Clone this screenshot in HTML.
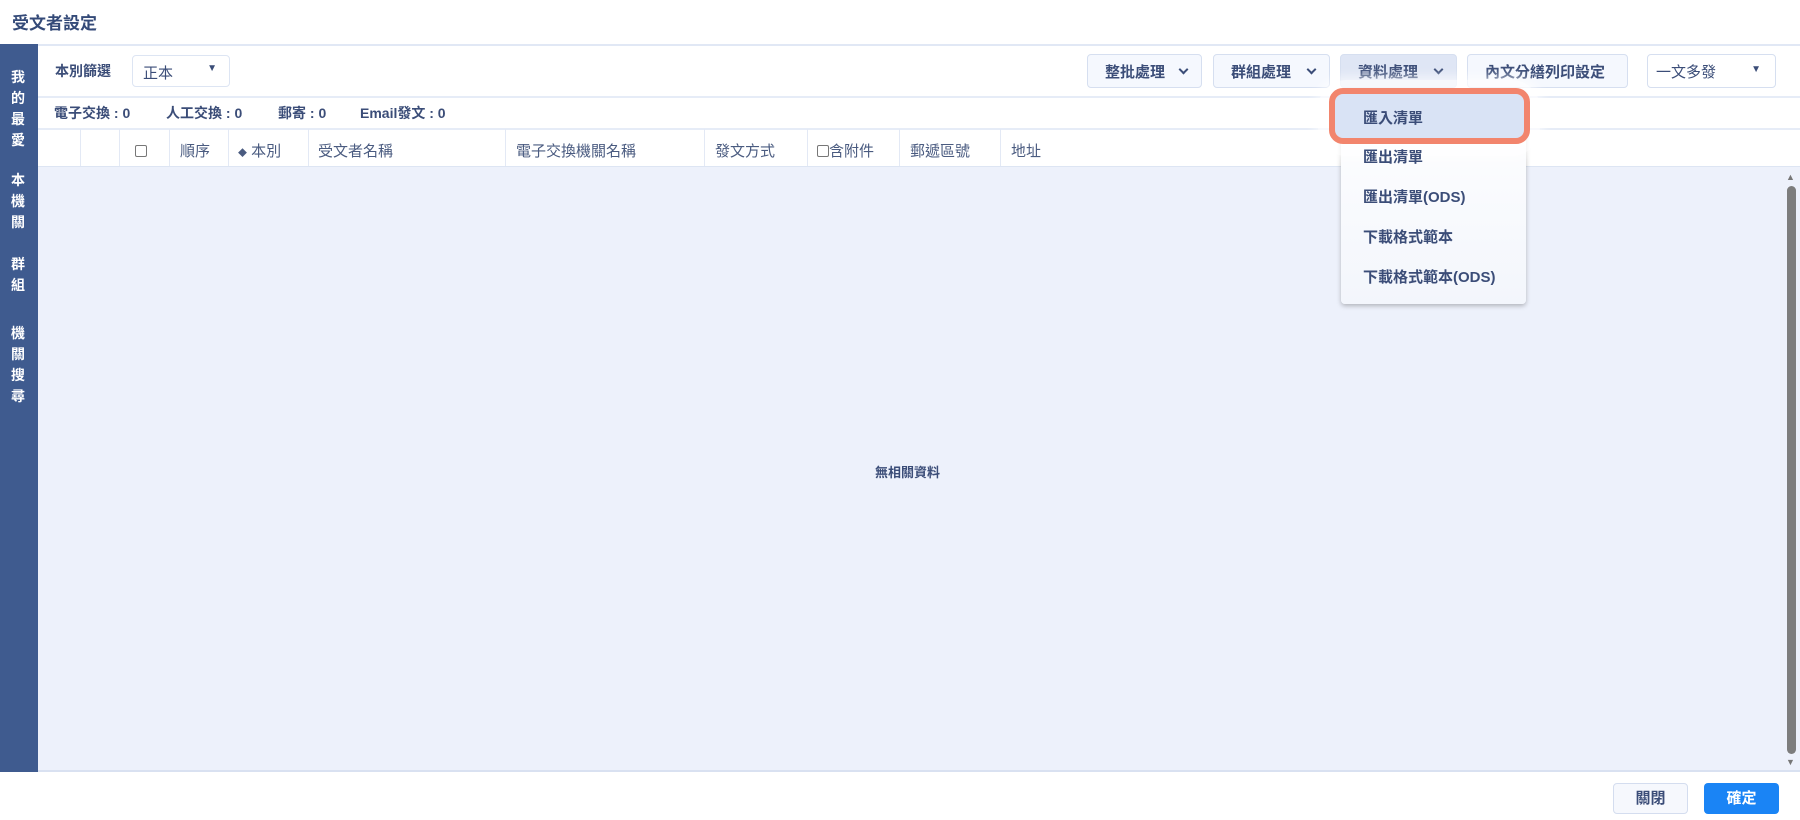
<!DOCTYPE html>
<html><head><meta charset="utf-8"><style>
*{box-sizing:border-box;margin:0;padding:0}
body{width:1800px;height:820px;background:#fff;font-family:"Liberation Sans","Noto Sans CJK TC",sans-serif;color:#3b4d78;position:relative;overflow:hidden;font-size:15px}
.a{position:absolute}
.sb{position:absolute;left:8px;width:20px;color:#fff;font-weight:bold;font-size:14px;line-height:21px;text-align:center}
.btn{position:absolute;top:54px;height:34px;border:1px solid #d6dff0;border-radius:4px;background:#f5f8fe;font-size:15px;font-weight:bold;display:flex;align-items:center;padding-left:17px;color:#3b4d78}
.chev{position:absolute;right:14px;top:11px;width:7px;height:7px;border-right:2px solid #3b4d78;border-bottom:2px solid #3b4d78;transform:rotate(45deg)}
.col{position:absolute;top:129px;height:37px;border-left:1px solid #e3e9f5}
.hd{position:absolute;top:140px;font-size:15px;color:#4a5b80}
.mi{position:absolute;left:1363px;font-size:15px;font-weight:bold;color:#3b4d78}
</style></head><body>
<div class="a" style="left:12px;top:9px;font-size:17px;font-weight:bold;color:#344a78">受文者設定</div>
<div class="a" style="left:0;top:44px;width:1800px;height:2px;background:#e1e8f5"></div>
<div class="a" style="left:0;top:44px;width:38px;height:728px;background:#3f5b8f"></div>
<div class="sb" style="top:67px">我<br>的<br>最<br>愛</div>
<div class="sb" style="top:170px">本<br>機<br>關</div>
<div class="sb" style="top:254px">群<br>組</div>
<div class="sb" style="top:323px">機<br>關<br>搜<br>尋</div>
<div class="a" style="left:55px;top:61px;font-size:14px;font-weight:bold">本別篩選</div>
<div class="a" style="left:132px;top:55px;width:98px;height:32px;border:1px solid #dde5f3;border-radius:4px;padding:6px 10px;font-size:15px">正本<span style="position:absolute;right:12px;top:7px;font-size:10px">▼</span></div>
<div class="btn" style="left:1087px;width:115px">整批處理<i class="chev"></i></div>
<div class="btn" style="left:1213px;width:117px">群組處理<i class="chev"></i></div>
<div class="btn" style="left:1340px;width:117px;background:#dfe6f5">資料處理<i class="chev"></i></div>
<div class="btn" style="left:1467px;width:161px">內文分繕列印設定</div>
<div class="btn" style="left:1647px;width:129px;background:#fff;padding-left:8px;font-weight:normal">一文多發<span style="position:absolute;right:14px;top:9px;font-size:10px">▼</span></div>
<div class="a" style="left:38px;top:96px;width:1762px;height:2px;background:#e6ecf7"></div>
<div class="a" style="left:54px;top:103px;font-size:14px;font-weight:bold">電子交換 : 0</div>
<div class="a" style="left:166px;top:103px;font-size:14px;font-weight:bold">人工交換 : 0</div>
<div class="a" style="left:278px;top:103px;font-size:14px;font-weight:bold">郵寄 : 0</div>
<div class="a" style="left:360px;top:103px;font-size:14px;font-weight:bold">Email發文 : 0</div>
<div class="a" style="left:38px;top:128px;width:1762px;height:2px;background:#e6ecf7"></div>
<div class="col" style="left:80px"></div><div class="col" style="left:119px"></div><div class="col" style="left:169px"></div><div class="col" style="left:228px"></div><div class="col" style="left:308px"></div><div class="col" style="left:505px"></div><div class="col" style="left:704px"></div><div class="col" style="left:807px"></div><div class="col" style="left:899px"></div><div class="col" style="left:1000px"></div>
<div class="a" style="left:135px;top:145px;width:12px;height:12px;border:1px solid #777;border-radius:2px;background:#fff"></div>
<div class="hd" style="left:180px">順序</div>
<div class="hd" style="left:238px"><span style="font-size:9px">◆</span> 本別</div>
<div class="hd" style="left:318px">受文者名稱</div>
<div class="hd" style="left:516px">電子交換機關名稱</div>
<div class="hd" style="left:715px">發文方式</div>
<div class="hd" style="left:817px"><span style="display:inline-block;width:12px;height:12px;border:1px solid #777;border-radius:2px;vertical-align:-1px"></span>含附件</div>
<div class="hd" style="left:910px">郵遞區號</div>
<div class="hd" style="left:1011px">地址</div>
<div class="a" style="left:38px;top:166px;width:1762px;height:606px;background:#edf1fb;border-top:1px solid #dde5f3;border-bottom:2px solid #d9e1f1"></div>
<div class="a" style="left:875px;top:462px;font-size:13px;font-weight:bold">無相關資料</div>
<div class="a" style="left:1786px;top:172px;font-size:9px;color:#777">▲</div>
<div class="a" style="left:1787px;top:186px;width:9px;height:568px;background:#7d7d7d;border-radius:5px"></div>
<div class="a" style="left:1786px;top:757px;font-size:9px;color:#777">▼</div>
<div class="a" style="left:1341px;top:90px;width:185px;height:214px;background:linear-gradient(#fff,#f3f6fc);border-radius:4px;box-shadow:0 2px 5px rgba(0,0,0,.25)"></div>
<div class="a" style="left:1318px;top:80px;width:222px;height:76px;background:rgba(255,255,255,.7);border-radius:28px;box-shadow:0 0 10px 4px rgba(255,255,255,.6)"></div>
<div class="a" style="left:1329px;top:88px;width:201px;height:56px;border:6px solid #f2856d;border-radius:14px;background:#d9e3f5"></div>
<div class="mi" style="top:107px">匯入清單</div>
<div class="mi" style="top:146px">匯出清單</div>
<div class="mi" style="top:186px">匯出清單(ODS)</div>
<div class="mi" style="top:226px">下載格式範本</div>
<div class="mi" style="top:266px">下載格式範本(ODS)</div>
<div class="a" style="left:1613px;top:783px;width:75px;height:31px;border:1px solid #d4ddef;border-radius:4px;background:#f6f8fd;text-align:center;line-height:29px;font-weight:bold;font-size:15px">關閉</div>
<div class="a" style="left:1704px;top:783px;width:75px;height:31px;border-radius:4px;background:#1a84f5;color:#fff;text-align:center;line-height:31px;font-weight:bold;font-size:15px">確定</div>
</body></html>
